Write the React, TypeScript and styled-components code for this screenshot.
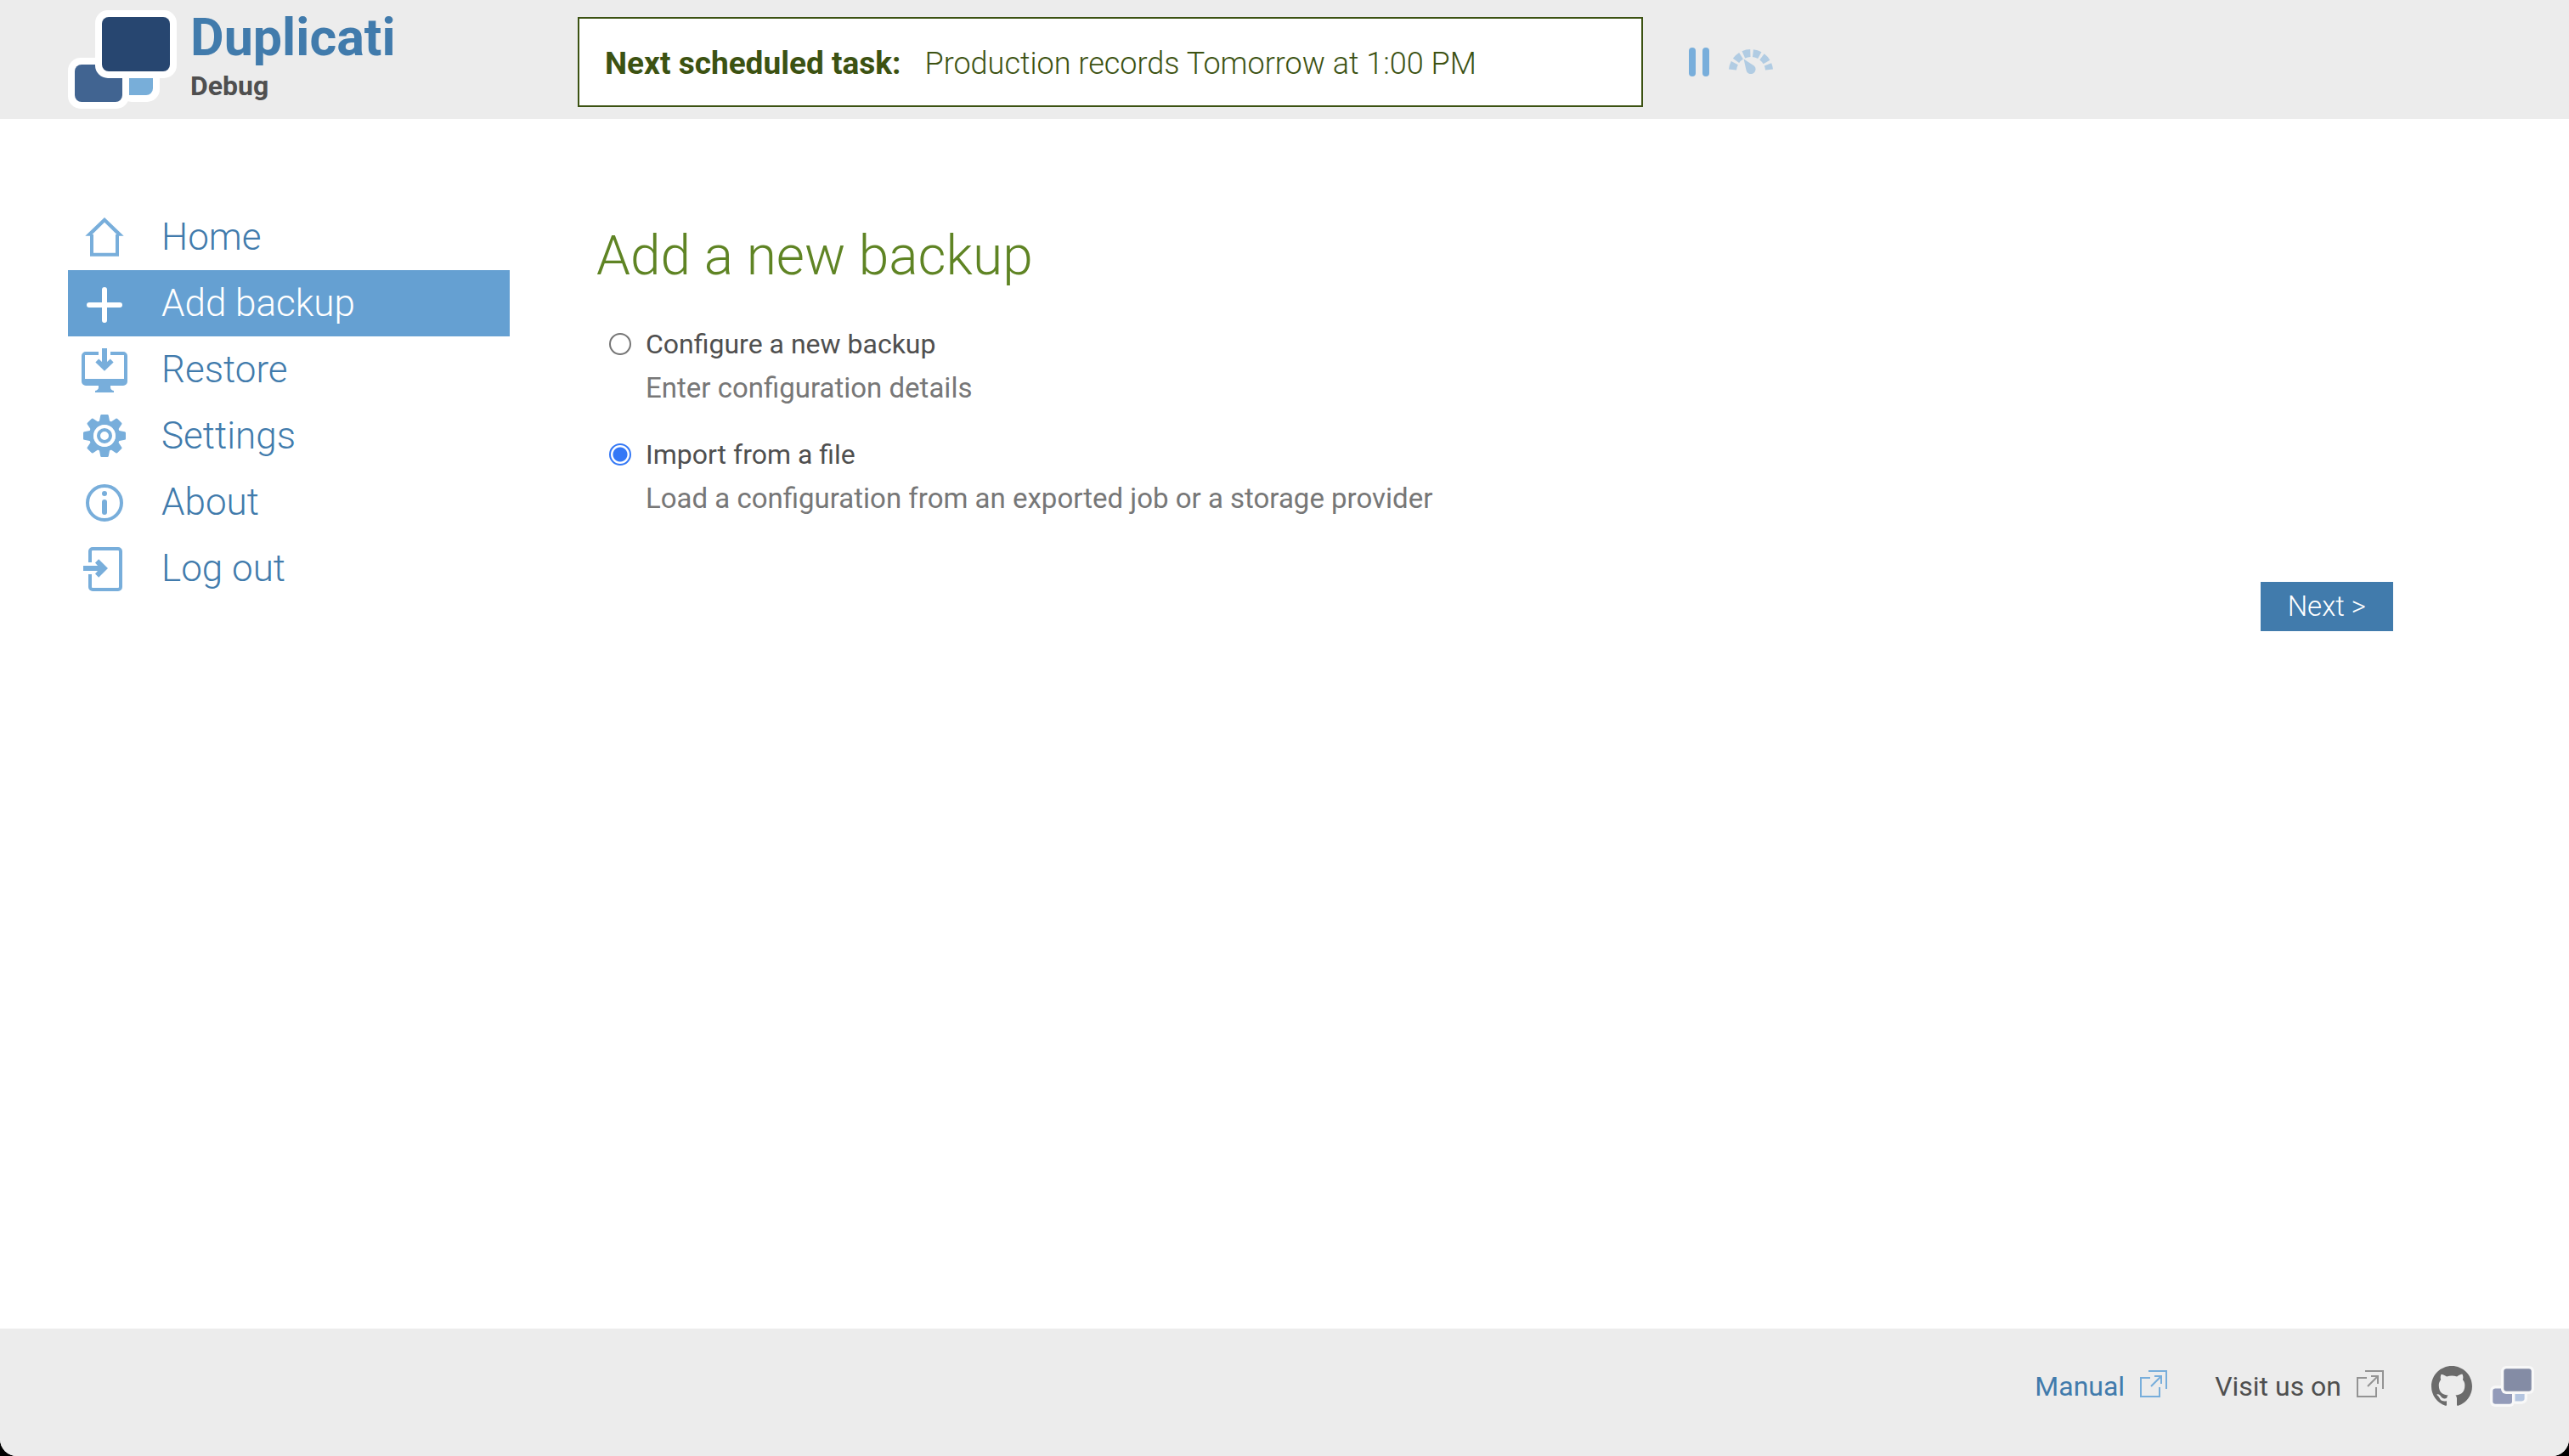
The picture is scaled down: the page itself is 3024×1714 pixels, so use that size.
import React, { useState } from 'react';
import styled, { createGlobalStyle } from 'styled-components';

const color = {
  bar: '#ececec',
  blue: '#417bac',
  sky: '#78aedb',
  active: '#65a0d2',
  green: '#5f8424',
  darkGreen: '#3c5212',
  text: '#4f4f4f',
  muted: '#777777',
  radio: '#3478f6',
};

const GlobalStyle = createGlobalStyle`
  *, *::before, *::after { box-sizing: border-box; }
  body {
    margin: 0;
    background: #000;
    color: ${color.text};
    font-family: Roboto, "Noto Sans", sans-serif;
    font-size: 32px;
    line-height: 52px;
  }
  a { color: inherit; text-decoration: none; }
  svg { display: block; flex: none; }
`;

const Page = styled.div`
  display: flex;
  flex-direction: column;
  min-height: 100vh;
  overflow: hidden;
  background: #fff;
  border-radius: 0 0 20px 20px;
`;

const Header = styled.header`
  display: flex;
  align-items: center;
  padding: 12px 80px;
  background: ${color.bar};
`;

const Brand = styled.a`
  display: flex;
  align-items: center;
  gap: 16px;
  flex: 0 0 600px;
`;

const BrandText = styled.span`
  display: grid;
  gap: 4px;
  padding-top: 2px;
  font-weight: 700;
`;

const BrandName = styled.span`
  color: ${color.blue};
  font-size: 61px;
  line-height: 56px;
`;

const BrandSuffix = styled.span`
  line-height: 50px;
`;

const StatusArea = styled.div`
  display: flex;
  align-items: center;
  gap: 54px;
  flex: 1;
  padding-top: 6px;
`;

const Status = styled.div`
  display: flex;
  align-items: center;
  gap: 28px;
  flex: 0 1 1254px;
  padding: 27px 30px 23px;
  border: 2px solid ${color.darkGreen};
  background: #fff;
  color: ${color.darkGreen};
  font-size: 36px;
  font-weight: 350;
`;

const StatusLabel = styled.strong`
  font-size: 37px;
  font-weight: 700;
`;

const Controls = styled.div`
  display: flex;
  gap: 22px;
`;

const IconButton = styled.button`
  padding: 0;
  border: 0;
  background: none;
  color: ${color.sky};
  cursor: pointer;
`;

const Body = styled.div`
  display: flex;
  flex: 1;
  gap: 102px;
  padding: 100px 207px 100px 80px;
`;

const Sidebar = styled.nav`
  flex: 0 0 520px;
`;

const NavLink = styled.a<{ $active?: boolean }>`
  display: flex;
  align-items: center;
  gap: 40px;
  height: 78px;
  padding: 0 16px;
  font-size: 44px;
  font-weight: 350;
  color: ${(p) => (p.$active ? '#fff' : color.blue)};
  background: ${(p) => (p.$active ? color.active : 'transparent')};

  svg { color: ${(p) => (p.$active ? '#fff' : color.sky)}; }
`;

const Main = styled.main`
  display: flex;
  flex-direction: column;
  flex: 1;
  padding-top: 20px;
`;

const Title = styled.h1`
  margin: 0 0 35px;
  color: ${color.green};
  font-size: 64px;
  font-weight: 350;
  line-height: 84px;
`;

const Options = styled.form`
  display: grid;
  gap: 26px;
  padding-left: 15px;
`;

const Option = styled.label`
  display: grid;
  grid-template-columns: 26px 1fr;
  column-gap: 17px;
  align-items: center;
  cursor: pointer;
`;

const Radio = styled.input`
  appearance: none;
  width: 26px;
  height: 26px;
  margin: 0;
  border: 2px solid #767676;
  border-radius: 50%;
  background: #fff;

  &:checked {
    border-color: ${color.radio};
    background: radial-gradient(circle, ${color.radio} 8px, #fff 9px);
  }
`;

const Hint = styled.span`
  grid-column: 2;
  color: ${color.muted};
  font-size: 33px;
`;

const NextButton = styled.button`
  align-self: flex-end;
  margin-top: 72px;
  padding: 0 32px;
  border: 0;
  background: ${color.blue};
  color: #fff;
  font: inherit;
  font-size: 33px;
  font-weight: 350;
  line-height: 58px;
  cursor: pointer;
`;

const Footer = styled.footer`
  display: flex;
  justify-content: flex-end;
  align-items: center;
  gap: 56px;
  padding: 44px 41px 58px;
  background: ${color.bar};
  line-height: 48px;
`;

const FooterItem = styled.div<{ $icon: string }>`
  display: flex;
  align-items: center;
  gap: 18px;

  svg { color: ${(p) => p.$icon}; }
`;

const FooterLink = styled.a`
  display: flex;
  align-items: center;
  gap: 18px;
  color: ${color.blue};
`;

const SocialLinks = styled.div`
  display: flex;
  gap: 21px;
  color: #6b6b6b;
`;

const LogoMark = ({ width, height, fills, rim }: { width: number; height: number; fills: [string, string, string]; rim: string }) => (
  <svg width={width} height={height} viewBox="0 0 128 116" preserveAspectRatio="none" aria-hidden="true">
    <rect x="60" y="60" width="48" height="48" rx="15" fill={rim} />
    <path d="M70 78h30v14a8 8 0 0 1-8 8H70z" fill={fills[2]} />
    <path d="M15 56h42a15 15 0 0 1 15 15v30a15 15 0 0 1-15 15H15a15 15 0 0 1-15-15V71a15 15 0 0 1 15-15z" fill={rim} />
    <rect x="8" y="64" width="56" height="44" rx="8" fill={fills[1]} />
    <rect x="32" y="0" width="96" height="80" rx="15" fill={rim} />
    <rect x="40" y="8" width="80" height="64" rx="8" fill={fills[0]} />
    <path d="M64 79h8v21h-8z" fill={rim} />
  </svg>
);

const PauseIcon = () => (
  <svg width="24" height="34" viewBox="0 0 24 34" fill="currentColor" aria-hidden="true">
    <rect width="8" height="34" rx="4" />
    <rect x="16" width="8" height="34" rx="4" />
  </svg>
);

const GaugeIcon = () => (
  <svg width="54" height="34" viewBox="0 0 54 34" opacity="0.5" aria-hidden="true">
    <g fill="none" stroke="currentColor" strokeWidth="9">
      <path d="M5.5 26A21.6 21.6 0 0 1 48.5 26" strokeDasharray="8.2 3.2" />
    </g>
    <path d="M18.6 13.6L30.8 21.4A5.6 5.6 0 1 1 21.4 26.2z" fill="currentColor" />
  </svg>
);

const HomeIcon = () => (
  <svg width="54" height="54" viewBox="0 0 54 54" aria-hidden="true">
    <path fill="currentColor" fillRule="evenodd" d="M27 4L49.7 25.8H44V49.7H10V25.8H4.3zM27 9.8L12.5 23.9H14V45.8H40V23.9H41.5z" />
  </svg>
);

const PlusIcon = () => (
  <svg width="54" height="54" viewBox="0 0 54 54" aria-hidden="true">
    <path d="M27 11V47M9 29H45" stroke="currentColor" strokeWidth="6" strokeLinecap="round" />
  </svg>
);

const RestoreIcon = () => (
  <svg width="54" height="54" viewBox="0 0 54 54" fill="currentColor" aria-hidden="true">
    <path d="M20 6v4H4v28h46V10H34V6h15a5 5 0 0 1 5 5v30a5 5 0 0 1-5 5H34v2q0 3 4 4v2H16v-2q4-1 4-4v-2H5a5 5 0 0 1-5-5V11a5 5 0 0 1 5-5z" />
    <path d="M24 2h6v16l3.800-3.500 3.800 4L27 28.700 16.400 18.500l3.800-4L24 18z" />
  </svg>
);

const GearIcon = () => (
  <svg width="54" height="54" viewBox="0 0 54 54" aria-hidden="true">
    <g fill="currentColor">
      {[0, 45, 90, 135, 180, 225, 270, 315].map((angle) => (
        <path key={angle} transform={`rotate(${angle} 27 27)`} d="M20.500 12L22.200 3.200Q22.400 2 23.600 2H30.400Q31.600 2 31.800 3.200L33.500 12z" />
      ))}
    </g>
    <circle cx="27" cy="27" r="15.500" fill="none" stroke="currentColor" strokeWidth="5.500" />
    <circle cx="27" cy="27" r="13" fill="#fff" />
    <circle cx="27" cy="27" r="7" fill="none" stroke="currentColor" strokeWidth="4" />
  </svg>
);

const InfoIcon = () => (
  <svg width="54" height="54" viewBox="0 0 54 54" fill="currentColor" aria-hidden="true">
    <circle cx="27" cy="28" r="20" fill="none" stroke="currentColor" strokeWidth="4" />
    <circle cx="27" cy="17" r="3" />
    <rect x="24" y="24" width="6" height="18" rx="3" />
  </svg>
);

const LogoutIcon = () => (
  <svg width="54" height="54" viewBox="0 0 54 54" aria-hidden="true">
    <path d="M10 20V7a3 3 0 0 1 3-3H43a3 3 0 0 1 3 3V49a3 3 0 0 1-3 3H13a3 3 0 0 1-3-3V34" fill="none" stroke="currentColor" strokeWidth="4" />
    <path d="M2 24H19l-3-3.500 4.200-4.200L31 27 20.200 37.800 16 33.500 19 30H2z" fill="currentColor" />
  </svg>
);

const ExternalIcon = () => (
  <svg width="32" height="38" viewBox="0 0 32 38" fill="none" stroke="currentColor" strokeWidth="2" aria-hidden="true">
    <path d="M10 1H31V22M12 9H1V31H23V20M13 19L25 7M17 7H25V16" />
  </svg>
);

const GithubIcon = () => (
  <svg width="48" height="48" viewBox="0 0 16 16" fill="currentColor" aria-hidden="true">
    <path d="M8 0c4.42 0 8 3.58 8 8a8.013 8.013 0 0 1-5.45 7.59c-.4.08-.55-.17-.55-.38 0-.27.01-1.13.01-2.2 0-.75-.25-1.23-.54-1.48 1.78-.2 3.65-.88 3.65-3.95 0-.88-.31-1.59-.82-2.15.08-.2.36-1.02-.08-2.12 0 0-.67-.22-2.2.82-.64-.18-1.32-.27-2-.27-.68 0-1.36.09-2 .27-1.53-1.03-2.2-.82-2.2-.82-.44 1.1-.16 1.92-.08 2.12-.51.56-.82 1.28-.82 2.15 0 3.06 1.86 3.75 3.64 3.95-.23.2-.44.55-.51 1.07-.46.21-1.61.55-2.33-.66-.15-.24-.6-.83-1.23-.82-.67.01-.27.38.01.53.34.19.73.9.82 1.13.16.45.68 1.31 2.69.94 0 .67.01 1.3.01 1.49 0 .21-.15.45-.55.38A7.995 7.995 0 0 1 0 8c0-4.42 3.58-8 8-8Z" />
  </svg>
);

const navItems = [
  { label: 'Home', Icon: HomeIcon },
  { label: 'Add backup', Icon: PlusIcon, active: true },
  { label: 'Restore', Icon: RestoreIcon },
  { label: 'Settings', Icon: GearIcon },
  { label: 'About', Icon: InfoIcon },
  { label: 'Log out', Icon: LogoutIcon },
];

const backupOptions = [
  { id: 'new', title: 'Configure a new backup', hint: 'Enter configuration details' },
  { id: 'import', title: 'Import from a file', hint: 'Load a configuration from an exported job or a storage provider' },
];

export default function App() {
  const [selected, setSelected] = useState('import');

  return (
    <Page>
      <GlobalStyle />
      <Header>
        <Brand href="#home">
          <LogoMark width={128} height={116} fills={['#274670', '#416491', '#78aed9']} rim="#fff" />
          <BrandText>
            <BrandName>Duplicati</BrandName>
            <BrandSuffix>Debug</BrandSuffix>
          </BrandText>
        </Brand>
        <StatusArea>
          <Status>
            <StatusLabel>Next scheduled task:</StatusLabel>
            <span>Production records Tomorrow at 1:00 PM</span>
          </Status>
          <Controls>
            <IconButton type="button" aria-label="Pause"><PauseIcon /></IconButton>
            <IconButton type="button" aria-label="Throttle"><GaugeIcon /></IconButton>
          </Controls>
        </StatusArea>
      </Header>

      <Body>
        <Sidebar>
          {navItems.map(({ label, Icon, active }) => (
            <NavLink key={label} href={`#${label}`} $active={active}>
              <Icon />
              {label}
            </NavLink>
          ))}
        </Sidebar>
        <Main>
          <Title>Add a new backup</Title>
          <Options>
            {backupOptions.map(({ id, title, hint }) => (
              <Option key={id} htmlFor={id}>
                <Radio
                  type="radio"
                  id={id}
                  name="backup"
                  checked={selected === id}
                  onChange={() => setSelected(id)}
                />
                <span>{title}</span>
                <Hint>{hint}</Hint>
              </Option>
            ))}
          </Options>
          <NextButton type="button">Next &gt;</NextButton>
        </Main>
      </Body>

      <Footer>
        <FooterItem $icon={color.sky}>
          <FooterLink href="#manual">
            Manual
            <ExternalIcon />
          </FooterLink>
        </FooterItem>
        <FooterItem $icon="#939393">
          Visit us on
          <ExternalIcon />
        </FooterItem>
        <SocialLinks>
          <a href="#github" aria-label="GitHub"><GithubIcon /></a>
          <a href="#duplicati" aria-label="Duplicati">
            <LogoMark width={52} height={48} fills={['#848ca5', '#939bb9', '#b4c5e0']} rim="#f8f8f8" />
          </a>
        </SocialLinks>
      </Footer>
    </Page>
  );
}
